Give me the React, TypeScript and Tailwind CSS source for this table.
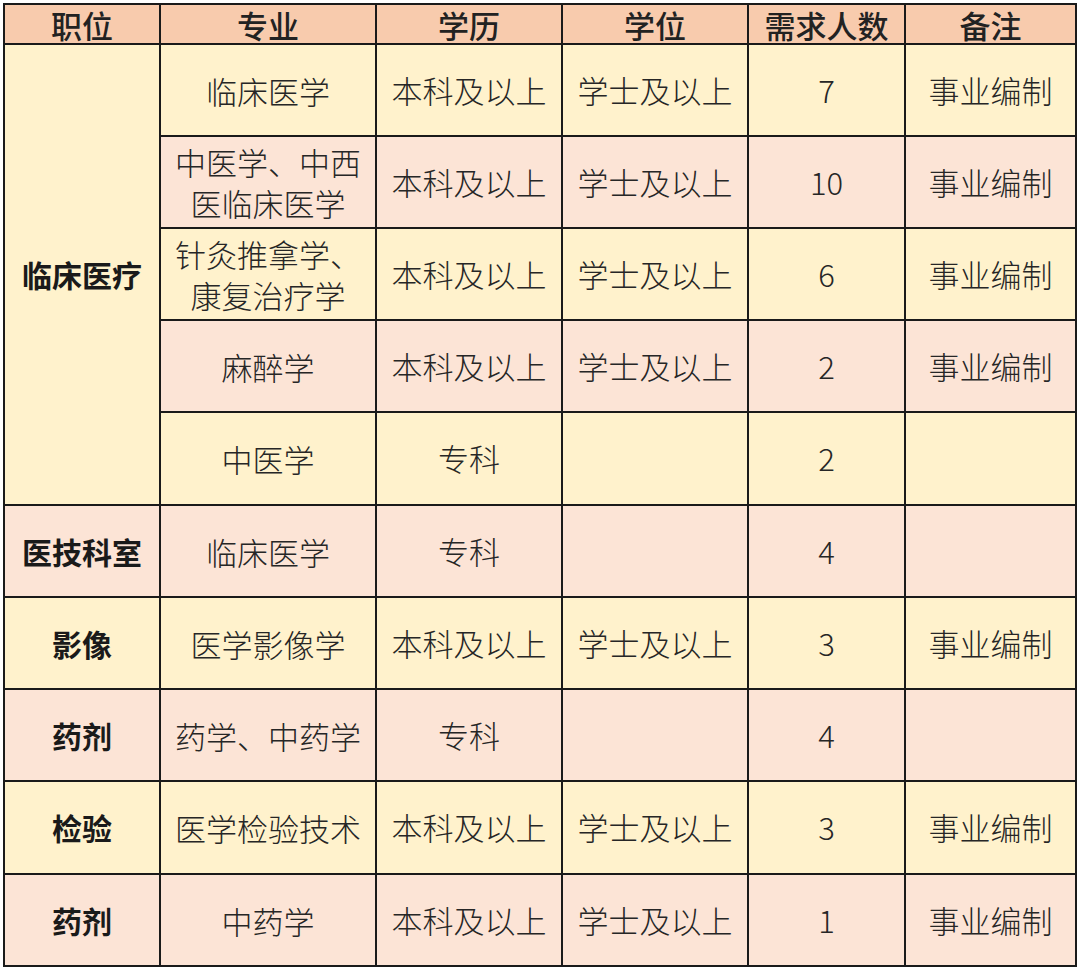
import React from "react";

const Y = "bg-[#fff2cc]";
const P = "bg-[#fce4d6]";

type Row = {
  pos?: string;
  posSpan?: number;
  major: React.ReactNode;
  edu: string;
  deg: string;
  num: string;
  note: string;
  bg: string;
};

const rows: Row[] = [
  { pos: "临床医疗", posSpan: 5, major: "临床医学", edu: "本科及以上", deg: "学士及以上", num: "7", note: "事业编制", bg: Y },
  { major: (<>中医学、中西<br />医临床医学</>), edu: "本科及以上", deg: "学士及以上", num: "10", note: "事业编制", bg: P },
  { major: (<>针灸推拿学、<br />康复治疗学</>), edu: "本科及以上", deg: "学士及以上", num: "6", note: "事业编制", bg: Y },
  { major: "麻醉学", edu: "本科及以上", deg: "学士及以上", num: "2", note: "事业编制", bg: P },
  { major: "中医学", edu: "专科", deg: "", num: "2", note: "", bg: Y },
  { pos: "医技科室", posSpan: 1, major: "临床医学", edu: "专科", deg: "", num: "4", note: "", bg: P },
  { pos: "影像", posSpan: 1, major: "医学影像学", edu: "本科及以上", deg: "学士及以上", num: "3", note: "事业编制", bg: Y },
  { pos: "药剂", posSpan: 1, major: "药学、中药学", edu: "专科", deg: "", num: "4", note: "", bg: P },
  { pos: "检验", posSpan: 1, major: "医学检验技术", edu: "本科及以上", deg: "学士及以上", num: "3", note: "事业编制", bg: Y },
  { pos: "药剂", posSpan: 1, major: "中药学", edu: "本科及以上", deg: "学士及以上", num: "1", note: "事业编制", bg: P },
];

const cell = "flex items-center justify-center text-center";
const body = "text-[31px] font-light text-[#262626]";

export default function App() {
  return (
    <div className="min-h-[971px] w-[1080px] bg-white pl-[3px] pt-[3px]" style={{ fontFamily: '"Noto Sans CJK SC", "Noto Sans", sans-serif' }}>
      <div className="grid w-fit grid-cols-[154px_214px_184px_184px_155px_169px] grid-rows-[38px_90px_90px_90px_90px_91px_90px_90px_90px_91px_90px] gap-[2px] bg-[#1a1a1a] p-[2px]">
        {["职位", "专业", "学历", "学位", "需求人数", "备注"].map((h) => (
          <div key={h} className={`${cell} bg-[#f8cbad] text-[31px] leading-none font-medium text-[#222222]`}>
            {h}
          </div>
        ))}
        {rows.map((r, i) => (
          <React.Fragment key={i}>
            {r.pos && (
              <div
                className={`${cell} ${r.bg} text-[30px] font-bold text-[#1a1a1a] ${r.posSpan === 5 ? "row-span-5" : ""}`}
              >
                {r.pos}
              </div>
            )}
            <div className={`${cell} ${r.bg} ${body} leading-[41px]`}>{r.major}</div>
            <div className={`${cell} ${r.bg} ${body}`}>{r.edu}</div>
            <div className={`${cell} ${r.bg} ${body}`}>{r.deg}</div>
            <div className={`${cell} ${r.bg} ${body}`}>{r.num}</div>
            <div className={`${cell} ${r.bg} ${body}`}>{r.note}</div>
          </React.Fragment>
        ))}
      </div>
    </div>
  );
}
